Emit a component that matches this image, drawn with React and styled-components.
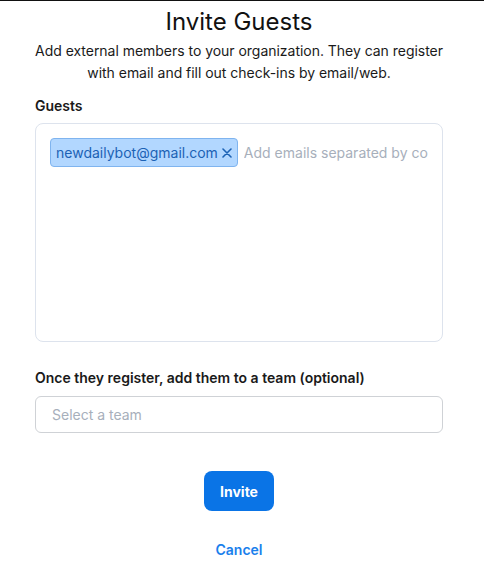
import React from "react";
import styled, { createGlobalStyle } from "styled-components";

const GlobalStyle = createGlobalStyle`
  html, body {
    margin: 0;
    padding: 0;
    background: #ffffff;
  }
  body {
    font-family: Inter, "Noto Sans", sans-serif;
    color: #1a1a1a;
    border-top: 1px solid #111;
  }
`;

const Page = styled.div`
  padding: 0 41px 0 35px;
  display: flex;
  flex-direction: column;
`;

const Title = styled.h1`
  margin: 6px 0 0;
  font-size: 24px;
  font-weight: 400;
  line-height: 30px;
  text-align: center;
  color: #111;
`;

const Subtitle = styled.p`
  margin: 3px -12px 0;
  font-size: 14px;
  line-height: 22px;
  letter-spacing: -0.03px;
  text-align: center;
  white-space: nowrap;
  color: #1a1a1a;
`;

const Label = styled.label`
  display: block;
  margin-top: ${(p) => p.$top}px;
  font-size: 14px;
  font-weight: 600;
  line-height: 20px;
  color: #1a1a1a;
`;

const GuestBox = styled.div`
  margin-top: 7px;
  height: 219px;
  box-sizing: border-box;
  border: 1px solid #dde3ed;
  border-radius: 8px;
  padding: 14px 14px;
  display: flex;
  align-items: flex-start;
  gap: 6px;
  overflow: hidden;
`;

const Chip = styled.span`
  display: inline-flex;
  align-items: center;
  gap: 4px;
  height: 29px;
  box-sizing: border-box;
  padding: 0 5px 0 5px;
  background: #b2d7ff;
  border: 1px solid #7fb4ef;
  border-radius: 4px;
  color: #1c62b5;
  font-size: 14px;
  white-space: nowrap;
  flex-shrink: 0;
`;

const RemoveIcon = styled.svg`
  width: 10px;
  height: 10px;
  flex-shrink: 0;
`;

const EmailInput = styled.input`
  flex: 1;
  min-width: 0;
  height: 29px;
  border: none;
  outline: none;
  padding: 0;
  font-family: inherit;
  font-size: 14px;
  color: #1a1a1a;
  background: transparent;

  &::placeholder {
    color: #a7afbb;
  }
`;

const TeamSelect = styled.div`
  margin-top: 8px;
  height: 37px;
  box-sizing: border-box;
  border: 1px solid #cfd2d6;
  border-radius: 6px;
  padding: 0 16px;
  display: flex;
  align-items: center;
  font-size: 14px;
  color: #a7afbb;
`;

const Actions = styled.div`
  margin-top: 38px;
  display: flex;
  flex-direction: column;
  align-items: center;
  gap: 29px;
`;

const InviteButton = styled.button`
  width: 70px;
  height: 40px;
  border: none;
  border-radius: 8px;
  background: #0a74e6;
  color: #ffffff;
  font-family: inherit;
  font-size: 14px;
  font-weight: 700;
  cursor: pointer;
`;

const CancelButton = styled.button`
  border: none;
  background: none;
  padding: 0;
  color: #1a80ec;
  font-family: inherit;
  font-size: 14px;
  font-weight: 600;
  line-height: 20px;
  cursor: pointer;
`;

const App = () => {
  return (
    <>
      <GlobalStyle />
      <Page>
        <Title>Invite Guests</Title>
        <Subtitle>
          Add external members to your organization. They can register
          <br />
          with email and fill out check-ins by email/web.
        </Subtitle>

        <Label $top={12}>Guests</Label>
        <GuestBox>
          <Chip>
            newdailybot@gmail.com
            <RemoveIcon viewBox="0 0 10 10">
              <path
                d="M1 1 L9 9 M9 1 L1 9"
                stroke="#1c62b5"
                strokeWidth="1.6"
                strokeLinecap="round"
              />
            </RemoveIcon>
          </Chip>
          <EmailInput placeholder="Add emails separated by commas" />
        </GuestBox>

        <Label $top={26}>Once they register, add them to a team (optional)</Label>
        <TeamSelect>Select a team</TeamSelect>

        <Actions>
          <InviteButton>Invite</InviteButton>
          <CancelButton>Cancel</CancelButton>
        </Actions>
      </Page>
    </>
  );
};

export default App;
